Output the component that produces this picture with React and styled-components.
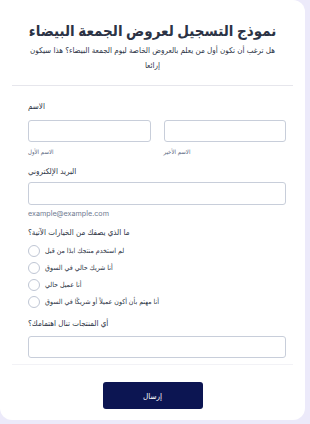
import React from "react";
import styled, { createGlobalStyle } from "styled-components";

const GlobalStyle = createGlobalStyle`
  html, body {
    margin: 0;
    padding: 0;
    background: #eceafa;
    font-family: "Inter", "DejaVu Sans Condensed", "DejaVu Sans", sans-serif;
    color: #2c3345;
  }
`;

const Card = styled.form`
  width: 305px;
  height: 420px;
  box-sizing: border-box;
  background: #fff;
  border-radius: 0 12px 12px 12px;
  display: flex;
  flex-direction: column;
`;

const Header = styled.header`
  margin: 0 12px;
  padding: 20px 8px 12px;
  text-align: center;
  border-bottom: 1px solid #e6e6ec;
`;

const Title = styled.h1`
  margin: 0;
  font-size: 15px;
  font-weight: 700;
  line-height: 22px;
  color: #2c3345;
`;

const Subtitle = styled.p`
  margin: 1px 0 0;
  padding: 0 5px;
  font-size: 8px;
  line-height: 15px;
  color: #2c3345;
`;

const Body = styled.div`
  padding: 14px 19px 0 28px;
  display: flex;
  flex-direction: column;
`;

const Label = styled.label`
  font-size: 8px;
  line-height: 12px;
  color: #2c3345;
  margin-top: ${(p) => p.$top || 0}px;
  margin-bottom: ${(p) => p.$bottom ?? 8}px;
`;

const Row = styled.div`
  display: grid;
  grid-template-columns: 1fr 1fr;
  column-gap: 13px;
`;

const Field = styled.div`
  display: flex;
  flex-direction: column;
`;

const Input = styled.input`
  box-sizing: border-box;
  width: 100%;
  height: ${(p) => p.$h || 22}px;
  border: 1px solid #c8ceda;
  border-radius: 3px;
  background: #fff;
  padding: 0 6px;
  margin: 0;
`;

const Sublabel = styled.span`
  font-size: 6px;
  line-height: 10px;
  color: #57647e;
  margin-top: 5px;
`;

const Hint = styled.span`
  font-size: 7.2px;
  line-height: 10px;
  color: #6f7a90;
  margin-top: 4px;
`;

const Options = styled.div`
  display: flex;
  flex-direction: column;
  gap: 5px;
`;

const Option = styled.label`
  display: flex;
  align-items: center;
  gap: 5px;
  font-size: 7px;
  line-height: 12px;
  color: #2c3345;
`;

const Radio = styled.span`
  width: 12px;
  height: 12px;
  box-sizing: border-box;
  border: 1px solid #bfc6d4;
  border-radius: 50%;
  flex: none;
`;

const Footer = styled.div`
  margin: 6px 12px 0;
  border-top: 1px solid #f2f2f6;
  padding-top: 17px;
  display: flex;
  justify-content: center;
`;

const Submit = styled.button`
  width: 100px;
  height: 27px;
  border: none;
  border-radius: 3px;
  background: #0c1552;
  color: #fff;
  font-family: inherit;
  font-size: 8px;
`;

const options = [
  "لم استخدم منتجك ابدًا من قبل",
  "أنا شريك حالي في السوق",
  "أنا عميل حالي",
  "أنا مهتم بأن أكون عميلاً أو شريكًا في السوق",
];

export default function App() {
  return (
    <>
      <GlobalStyle />
      <Card onSubmit={(e) => e.preventDefault()}>
        <Header>
          <Title>نموذج التسجيل لعروض الجمعة البيضاء</Title>
          <Subtitle>
            هل ترغب أن تكون أول من يعلم بالعروض الخاصة ليوم الجمعة البيضاء؟ هذا سيكون إرائعا
          </Subtitle>
        </Header>
        <Body>
          <Label>الاسم</Label>
          <Row>
            <Field>
              <Input />
              <Sublabel>الاسم الأول</Sublabel>
            </Field>
            <Field>
              <Input />
              <Sublabel>الاسم الأخير</Sublabel>
            </Field>
          </Row>
          <Label $top={8} $bottom={5}>البريد الإلكتروني</Label>
          <Input $h={23} />
          <Hint>example@example.com</Hint>
          <Label $top={7} $bottom={7}>ما الذي يصفك من الخيارات الآتية؟</Label>
          <Options>
            {options.map((o) => (
              <Option key={o}>
                <Radio />
                {o}
              </Option>
            ))}
          </Options>
          <Label $top={9} $bottom={7}>أي المنتجات تنال اهتمامك؟</Label>
          <Input />
        </Body>
        <Footer>
          <Submit type="submit">إرسال</Submit>
        </Footer>
      </Card>
    </>
  );
}
